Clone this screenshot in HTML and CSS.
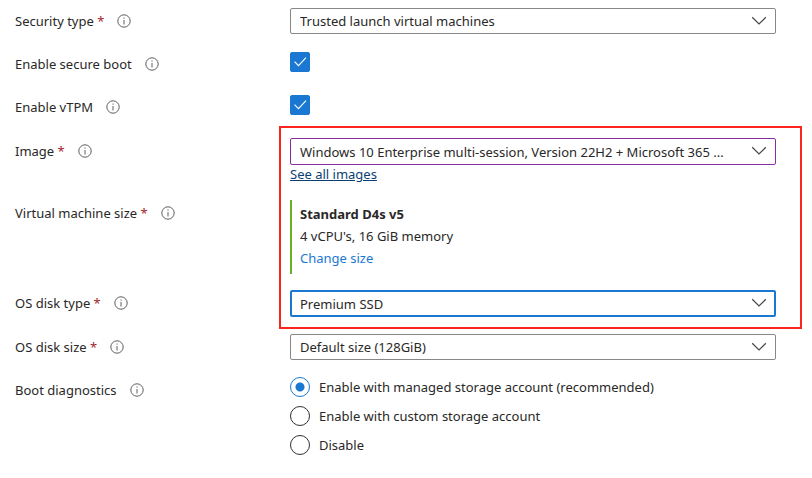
FILE: index.html
```html
<!DOCTYPE html>
<html lang="en">

<head>
  <meta charset="UTF-8">
  <meta name="viewport" content="width=device-width, initial-scale=1.0">
  <title>Virtual machine settings</title>
  <link rel="stylesheet" href="styles.css">
</head>

<body>
  <!-- Shared icons -->
  <svg class="sprite" aria-hidden="true">
    <symbol id="icon-info" viewBox="0 0 14 14">
      <circle cx="7" cy="7" r="6.2" fill="none" stroke="currentColor" />
      <path d="M7 6v4.5M7 3.5v1.2" fill="none" stroke="currentColor" />
    </symbol>
    <symbol id="icon-chevron" viewBox="0 0 16 10">
      <path d="M1.2 1.3l6.8 6.7 6.8-6.7" fill="none" stroke="currentColor" stroke-width="1.2" />
    </symbol>
    <symbol id="icon-check" viewBox="0 0 20 20">
      <path d="M4.5 9.7l4 4 7.5-8" fill="none" stroke="currentColor" stroke-width="1.1" />
    </symbol>
  </svg>

  <form class="settings">
    <div class="row">
      <div class="label">
        <label for="security-type">Security type <span class="required">*</span></label>
        <svg class="info"><use href="#icon-info" /></svg>
      </div>
      <div class="select">
        <select id="security-type">
          <option>Trusted launch virtual machines</option>
        </select>
        <svg class="chevron"><use href="#icon-chevron" /></svg>
      </div>
    </div>

    <div class="row">
      <div class="label">
        <label for="secure-boot">Enable secure boot</label>
        <svg class="info"><use href="#icon-info" /></svg>
      </div>
      <div class="checkbox">
        <input type="checkbox" id="secure-boot" checked>
        <svg class="check"><use href="#icon-check" /></svg>
      </div>
    </div>

    <div class="row">
      <div class="label">
        <label for="vtpm">Enable vTPM</label>
        <svg class="info"><use href="#icon-info" /></svg>
      </div>
      <div class="checkbox">
        <input type="checkbox" id="vtpm" checked>
        <svg class="check"><use href="#icon-check" /></svg>
      </div>
    </div>

    <div class="highlighted">
      <div class="row">
        <div class="label">
          <label for="image">Image <span class="required">*</span></label>
          <svg class="info"><use href="#icon-info" /></svg>
        </div>
        <div>
          <div class="select">
            <select id="image" class="edited">
              <option>Windows 10 Enterprise multi-session, Version 22H2 + Microsoft 365 ...</option>
            </select>
            <svg class="chevron"><use href="#icon-chevron" /></svg>
          </div>
          <a href="#" class="images-link">See all images</a>
        </div>
      </div>

      <div class="row">
        <div class="label">
          <span>Virtual machine size <span class="required">*</span></span>
          <svg class="info"><use href="#icon-info" /></svg>
        </div>
        <div class="vm-size">
          <strong>Standard D4s v5</strong>
          <span>4 vCPU's, 16 GiB memory</span>
          <a href="#">Change size</a>
        </div>
      </div>

      <div class="row">
        <div class="label">
          <label for="disk-type">OS disk type <span class="required">*</span></label>
          <svg class="info"><use href="#icon-info" /></svg>
        </div>
        <div class="select">
          <select id="disk-type" class="active">
            <option>Premium SSD</option>
          </select>
          <svg class="chevron"><use href="#icon-chevron" /></svg>
        </div>
      </div>
    </div>

    <div class="row">
      <div class="label">
        <label for="disk-size">OS disk size <span class="required">*</span></label>
        <svg class="info"><use href="#icon-info" /></svg>
      </div>
      <div class="select">
        <select id="disk-size">
          <option>Default size (128GiB)</option>
        </select>
        <svg class="chevron"><use href="#icon-chevron" /></svg>
      </div>
    </div>

    <div class="row">
      <div class="label">
        <span id="diagnostics-label">Boot diagnostics</span>
        <svg class="info"><use href="#icon-info" /></svg>
      </div>
      <div class="radios" role="radiogroup" aria-labelledby="diagnostics-label">
        <label><input type="radio" name="diagnostics" checked>Enable with managed storage account (recommended)</label>
        <label><input type="radio" name="diagnostics">Enable with custom storage account</label>
        <label><input type="radio" name="diagnostics">Disable</label>
      </div>
    </div>
  </form>
</body>

</html>
```
FILE: styles.css
```css
* {
  box-sizing: border-box;
}

body {
  margin: 0;
  background-color: #fff;
  color: #292827;
  font-family: 'Segoe UI', 'Noto Sans', 'Open Sans', sans-serif;
  font-size: 13px;
  line-height: 20px;
}

.sprite {
  display: none;
}

.settings,
.highlighted {
  display: flex;
  flex-direction: column;
  gap: 17px;
}

.settings {
  padding: 8px 36px 20px 15px;
}

.row {
  display: grid;
  grid-template-columns: 275px 1fr;
  align-items: start;
}

.label {
  display: flex;
  align-items: center;
  gap: 13px;
  height: 26px;
}

.required {
  color: #a4262c;
}

.info {
  width: 14px;
  height: 14px;
  color: #605e5c;
}

/* Drop-downs */
.select {
  position: relative;
}

select {
  appearance: none;
  display: block;
  width: 100%;
  height: 26px;
  padding: 0 32px 0 9px;
  border: 1px solid #8a8886;
  border-radius: 2px;
  background-color: #fff;
  color: inherit;
  font: inherit;
}

select.edited {
  height: 27px;
  border-color: #8a2da5;
}

select.active {
  height: 27px;
  padding-left: 8px;
  border: 2px solid #1a78d2;
}

.chevron {
  position: absolute;
  top: 8px;
  right: 9px;
  width: 16px;
  height: 10px;
  color: #484644;
  pointer-events: none;
}

/* Tick boxes */
.checkbox {
  position: relative;
  height: 26px;
  padding-top: 1px;
}

.checkbox input {
  appearance: none;
  display: block;
  width: 20px;
  height: 20px;
  margin: 0;
  border: 1px solid #323130;
  border-radius: 2px;
}

.checkbox input:checked {
  border-color: #1a78d2;
  background-color: #1a78d2;
}

.check {
  position: absolute;
  top: 1px;
  left: 0;
  width: 20px;
  height: 20px;
  color: #fff;
  pointer-events: none;
}

/* Image, size and disk */
.highlighted {
  position: relative;
  gap: 16px;
  padding-top: 1px;
}

.highlighted::after {
  content: '';
  position: absolute;
  top: -11px;
  right: -26px;
  bottom: -12px;
  left: 264px;
  border: 2px solid #fb251d;
  pointer-events: none;
}

.images-link {
  display: block;
  width: max-content;
  color: #0b3f73;
  line-height: 19px;
}

.vm-size {
  display: flex;
  flex-direction: column;
  align-items: flex-start;
  padding: 3px 0 5px 8px;
  border-left: 2px solid #69af22;
  line-height: 22px;
}

.vm-size a {
  color: #1a78d2;
  text-decoration: none;
}

/* Radio buttons */
.radios {
  display: flex;
  flex-direction: column;
  align-items: flex-start;
  gap: 9px;
}

.radios label {
  display: flex;
  align-items: center;
  gap: 9px;
}

.radios input {
  appearance: none;
  width: 20px;
  height: 20px;
  margin: 0;
  border: 1px solid #323130;
  border-radius: 50%;
}

.radios input:checked {
  border-color: #1a78d2;
  background: radial-gradient(circle, #1a78d2 4px, transparent 5px);
}
```
